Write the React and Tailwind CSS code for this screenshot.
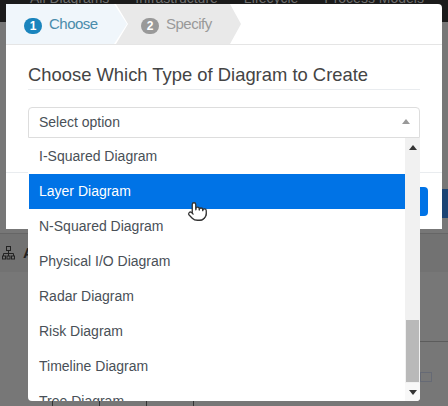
import { Pointer } from "lucide-react";

const options = [
  "I-Squared Diagram",
  "Layer Diagram",
  "N-Squared Diagram",
  "Physical I/O Diagram",
  "Radar Diagram",
  "Risk Diagram",
  "Timeline Diagram",
  "Tree Diagram",
];

function Triangle({ className }) {
  return <div className={`w-0 h-0 border-x-[4px] border-x-transparent ${className}`} />;
}

function Backdrop() {
  return (
    <div className="h-[406px] bg-[#777777] flex flex-col overflow-hidden">
      <div className="h-[32px] bg-[#1b1b1b] text-[#6e6e6e] text-sm leading-none flex gap-[26px] pl-[30px] -mt-[10px] pt-[1px] shrink-0 whitespace-nowrap">
        <span>All Diagrams</span>
        <span>Infrastructure</span>
        <span>Lifecycle</span>
        <span>Process Models</span>
      </div>
      <div className="mt-[167px] flex justify-end shrink-0">
        <div className="w-[6px] h-[29px] bg-[#1c4474]" />
      </div>
      <div className="mt-[15px] h-[39px] border-t border-[#666666] bg-[#727272] flex items-center pl-[2px] gap-2 shrink-0">
        <svg width="13" height="14" viewBox="0 0 13 14" fill="none" stroke="#222222" strokeWidth="1">
          <rect x="4.5" y="0.5" width="4" height="4" />
          <path d="M6.5 4.5v3M1.5 10V7.5h10V10M6.5 7.5V10" />
          <rect x="0.5" y="10" width="3" height="3" />
          <rect x="5" y="10" width="3" height="3" />
          <rect x="9.5" y="10" width="3" height="3" />
        </svg>
        <span className="font-bold text-[15px] text-[#222222]">A</span>
      </div>
      <div className="mt-[69px] flex justify-end shrink-0">
        <div className="w-[28px] h-px bg-[#5c5c5c]" />
      </div>
      <div className="mt-[30px] flex justify-end pr-[16px] shrink-0">
        <div className="w-[12px] h-[10px] border border-[#666a75]" />
      </div>
      <div className="mt-[19px] pl-[52px] flex gap-[46px] shrink-0">
        <div className="w-px h-[5px] bg-[#333333]" />
        <div className="w-px h-[5px] bg-[#333333]" />
        <div className="w-px h-[5px] bg-[#333333]" />
        <div className="w-px h-[5px] bg-[#333333]" />
      </div>
    </div>
  );
}

function Steps() {
  return (
    <div className="h-[41px] flex border-b border-[#e5e5e5] shrink-0">
      <div className="w-[121px] h-[40px] bg-[#f0f6fb] flex items-center pl-[18px] gap-[7px] [clip-path:polygon(0_0,108px_0,100%_50%,108px_100%,0_100%)] relative z-10">
        <span className="w-[18px] h-[16px] mt-[3px] rounded-full bg-[#1a84bd] text-white text-xs font-bold flex items-center justify-center">1</span>
        <span className="text-[#4a8cab] text-[15px] tracking-[-0.5px]">Choose</span>
      </div>
      <div className="w-[125px] h-[40px] -ml-[11px] bg-[#e9e9e9] flex items-center pl-[25px] gap-[7px] [clip-path:polygon(0_0,114px_0,100%_50%,114px_100%,0_100%,12px_50%)]">
        <span className="w-[18px] h-[16px] mt-[3px] rounded-full bg-[#999999] text-white text-xs font-bold flex items-center justify-center">2</span>
        <span className="text-[#999999] text-[15px] tracking-[-0.5px]">Specify</span>
      </div>
    </div>
  );
}

function Dropdown() {
  return (
    <div className="absolute left-[22px] top-[134px] w-[392px] h-[263px] bg-white rounded-b flex overflow-hidden">
      <ul className="flex-1 pl-px pt-px text-sm text-[#495057]">
        {options.map((option, i) => (
          <li
            key={option}
            className={`h-[35px] pl-[10px] pb-[2px] flex items-center ${i === 1 ? "bg-[#0073e6] text-white" : ""}`}
          >
            {option}
          </li>
        ))}
      </ul>
      <div className="w-[15px] bg-[#f1f1f1] flex flex-col items-center">
        <div className="h-[15px] w-full flex items-center justify-center mt-[2px]">
          <Triangle className="border-b-[5px] border-b-[#333333]" />
        </div>
        <div className="mt-[165px] w-[13px] h-[62px] bg-[#b9b9b9]" />
        <div className="mt-[1px] flex-1 w-full bg-[#f8f8f8] flex items-center justify-center">
          <Triangle className="border-t-[5px] border-t-[#333333]" />
        </div>
      </div>
    </div>
  );
}

export default function App() {
  return (
    <div className="relative w-[448px] h-[406px] overflow-hidden font-['Liberation_Sans',Arial,sans-serif]">
      <Backdrop />

      {/* Modal */}
      <div className="absolute left-[6px] top-[4px] w-[436px] h-[225px] bg-white flex flex-col rounded-t-sm">
        <Steps />
        <div className="px-[22px]">
          <h2 className="mt-[19px] text-[18.4px] leading-[22px] text-[#444444] pb-[3px] border-b border-[#e9ecef] whitespace-nowrap">
            Choose Which Type of Diagram to Create
          </h2>
          <div className="mt-[17px] h-[31px] border border-[#dddddd] rounded-t flex items-center justify-between pl-[10px] pr-[9px] pb-[2px] text-sm text-[#495057]">
            <span>Select option</span>
            <Triangle className="border-b-[5px] border-b-[#999999]" />
          </div>
        </div>
        <div className="mt-[34px] border-t border-[#e9ecef] flex justify-end pr-[14px]">
          <div className="mt-[14px] w-[8px] h-[29px] bg-[#0073e6] rounded-r" />
        </div>
        <Dropdown />
      </div>

      {/* Hand cursor */}
      <Pointer className="absolute left-[187px] top-[201px]" size={21} fill="#ffffff" stroke="#333333" strokeWidth={1.5} />
    </div>
  );
}
